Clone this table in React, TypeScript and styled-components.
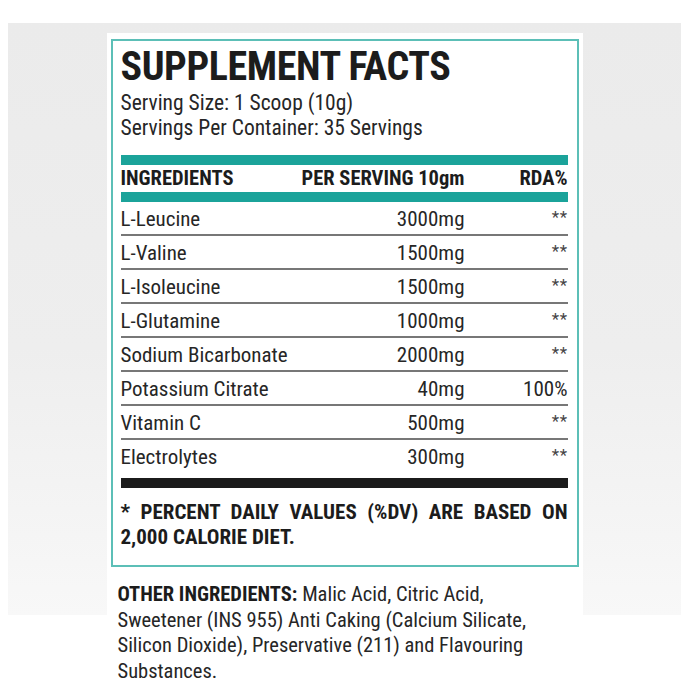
import React from "react";
import styled, { createGlobalStyle } from "styled-components";

const GlobalStyle = createGlobalStyle`
  html, body { margin: 0; padding: 0; background: #ffffff; }
  body { font-family: "Roboto Condensed", "Roboto", "Liberation Sans", sans-serif; color: #1f1f1f; }
`;

const Page = styled.div`
  padding-top: 23px;
`;

const Panel = styled.div`
  margin: 0 9px 0 8px;
  padding: 10px 0 20px;
  background-color: #ffffff;
  background-image: linear-gradient(to bottom, #ebebeb 0%, #eeeeee 55%, #f8f8f8 100%);
  background-repeat: no-repeat;
  background-size: 100% 592px;
`;

const Card = styled.div`
  width: 476px;
  margin: 0 auto;
  box-sizing: border-box;
  background: #ffffff;
  padding: 6px 4px 0;
`;

const FactsBox = styled.section`
  border: 2px solid #5cbfb7;
  padding: 6px 9px 15px 8px;
`;

const Title = styled.h1`
  margin: 0;
  font-family: "Roboto Condensed", "Roboto", sans-serif;
  font-weight: 700;
  font-size: 40px;
  line-height: 40px;
  letter-spacing: -0.4px;
  color: #1c1c1c;
`;

const ServingInfo = styled.div`
  margin-top: 3px;
  margin-bottom: 15px;
  font-size: 21.5px;
  line-height: 25px;
  color: #262626;
`;

const TealBar = styled.div`
  height: 10px;
  background: #1ba39a;
`;

const HeaderRow = styled.div`
  display: grid;
  grid-template-columns: 1fr 170px 103px;
  height: 27px;
  align-items: center;
  font-weight: 700;
  font-size: 20.5px;
  line-height: 27px;
  color: #1c1c1c;
`;

const Cell = styled.div<{ $align?: "left" | "right" }>`
  text-align: ${(p) => p.$align || "left"};
  white-space: nowrap;
`;

const Row = styled.div<{ $last?: boolean }>`
  display: grid;
  grid-template-columns: 1fr 170px 103px;
  padding-top: 3px;
  height: ${(p) => (p.$last ? "31px" : "29px")};
  line-height: 29px;
  font-size: 21px;
  color: #262626;
  border-bottom: ${(p) => (p.$last ? "none" : "2px solid #777777")};
`;

const Stars = styled.span`
  font-size: 17px;
  letter-spacing: 0.5px;
  color: #444;
  position: relative;
  top: -3px;
`;

const BlackBar = styled.div`
  margin-top: 4px;
  height: 10px;
  background: #1b1b1b;
`;

const Footnote = styled.div`
  margin-top: 12px;
  font-weight: 700;
  font-size: 21px;
  line-height: 25px;
  color: #1c1c1c;
`;

const JustifiedLine = styled.span`
  display: block;
  text-align: justify;
  text-align-last: justify;
`;

const OtherIngredients = styled.p`
  margin: 15px 0 0 7px;
  font-size: 20.5px;
  line-height: 25.5px;
  color: #262626;
  white-space: nowrap;
`;

const Bold = styled.span`
  font-weight: 700;
  color: #1c1c1c;
`;

type Ingredient = { name: string; amount: string; rda: string };

const ingredients: Ingredient[] = [
  { name: "L-Leucine", amount: "3000mg", rda: "**" },
  { name: "L-Valine", amount: "1500mg", rda: "**" },
  { name: "L-Isoleucine", amount: "1500mg", rda: "**" },
  { name: "L-Glutamine", amount: "1000mg", rda: "**" },
  { name: "Sodium Bicarbonate", amount: "2000mg", rda: "**" },
  { name: "Potassium Citrate", amount: "40mg", rda: "100%" },
  { name: "Vitamin C", amount: "500mg", rda: "**" },
  { name: "Electrolytes", amount: "300mg", rda: "**" },
];

export default function App() {
  return (
    <>
      <GlobalStyle />
      <Page>
        <Panel>
          <Card>
            <FactsBox>
              <Title>SUPPLEMENT FACTS</Title>
              <ServingInfo>
                Serving Size: 1 Scoop (10g)
                <br />
                Servings Per Container: 35 Servings
              </ServingInfo>
              <TealBar />
              <HeaderRow>
                <Cell>INGREDIENTS</Cell>
                <Cell $align="right">PER SERVING 10gm</Cell>
                <Cell $align="right">RDA%</Cell>
              </HeaderRow>
              <TealBar />
              {ingredients.map((ing, i) => (
                <Row key={ing.name} $last={i === ingredients.length - 1}>
                  <Cell>{ing.name}</Cell>
                  <Cell $align="right">{ing.amount}</Cell>
                  <Cell $align="right">
                    {ing.rda === "**" ? <Stars>**</Stars> : ing.rda}
                  </Cell>
                </Row>
              ))}
              <BlackBar />
              <Footnote>
                <JustifiedLine>* PERCENT DAILY VALUES (%DV) ARE BASED ON</JustifiedLine>
                2,000 CALORIE DIET.
              </Footnote>
            </FactsBox>
            <OtherIngredients>
              <Bold>OTHER INGREDIENTS:</Bold> Malic Acid, Citric Acid,
              <br />
              Sweetener (INS 955) Anti Caking (Calcium Silicate,
              <br />
              Silicon Dioxide), Preservative (211) and Flavouring
              <br />
              Substances.
            </OtherIngredients>
          </Card>
        </Panel>
      </Page>
    </>
  );
}
